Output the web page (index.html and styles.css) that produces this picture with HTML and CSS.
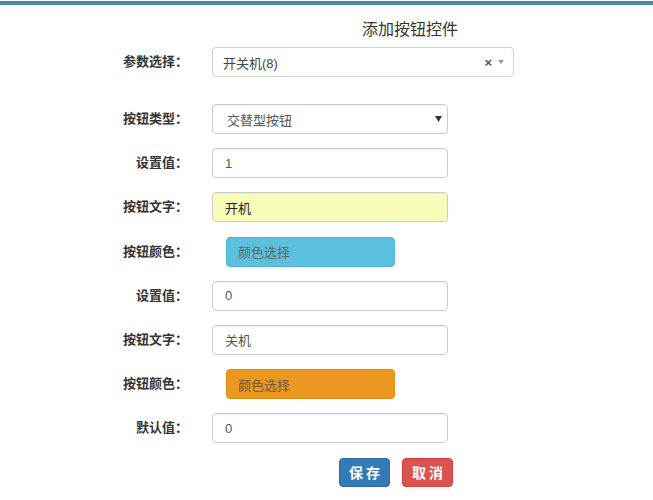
FILE: index.html
```html
<!DOCTYPE html>
<html lang="zh">
<head>
<meta charset="utf-8">
<title>添加按钮控件</title>
<link rel="stylesheet" href="styles.css">
</head>
<body>
<div class="topbar"></div>
<div class="page">
  <h3 class="title">添加按钮控件</h3>
  <form class="form">
    <div class="row row-first">
      <label class="label">参数选择：</label>
      <div class="select2">
        <span class="select2-text">开关机(8)</span>
        <span class="select2-clear">×</span>
        <span class="select2-arrow"></span>
      </div>
    </div>
    <div class="rows">
      <div class="row">
        <label class="label">按钮类型：</label>
        <div class="native-select">
          <span class="ns-text">交替型按钮</span>
          <svg class="ns-arrow" width="7" height="6" viewBox="0 0 7 6"><path d="M0 0H7L3.5 6Z" fill="#333"/></svg>
        </div>
      </div>
      <div class="row">
        <label class="label">设置值：</label>
        <div class="input">1</div>
      </div>
      <div class="row">
        <label class="label">按钮文字：</label>
        <div class="input input-yellow">开机</div>
      </div>
      <div class="row">
        <label class="label">按钮颜色：</label>
        <div class="color-btn color-blue">颜色选择</div>
      </div>
      <div class="row">
        <label class="label">设置值：</label>
        <div class="input">0</div>
      </div>
      <div class="row">
        <label class="label">按钮文字：</label>
        <div class="input">关机</div>
      </div>
      <div class="row">
        <label class="label">按钮颜色：</label>
        <div class="color-btn color-orange">颜色选择</div>
      </div>
      <div class="row">
        <label class="label">默认值：</label>
        <div class="input">0</div>
      </div>
      <div class="actions">
        <button type="button" class="btn btn-primary">保存</button>
        <button type="button" class="btn btn-danger">取消</button>
      </div>
    </div>
  </form>
</div>
</body>
</html>
```
FILE: styles.css
```css
* { box-sizing: border-box; }
html, body { margin: 0; padding: 0; background: #fff; }
body {
  font-family: "Liberation Sans", "Noto Sans CJK SC", sans-serif;
  color: #333;
  font-size: 13px;
}
.topbar {
  margin-top: 1px;
  height: 4px;
  background: #4a86b6;
}
.page { padding-top: 15px; }
.title {
  margin: 0 0 7px 362px;
  font-size: 16px;
  line-height: 20px;
  font-weight: normal;
  color: #333;
}
.form { display: flex; flex-direction: column; }
.row {
  display: flex;
  align-items: center;
  height: 30px;
}
.row-first { margin-bottom: 27px; }
.rows { display: flex; flex-direction: column; gap: 14.2px; }
.label {
  width: 188px;
  margin-right: 24px;
  padding-bottom: 3px;
  text-align: right;
  font-weight: bold;
  font-size: 13px;
  color: #333;
}
.select2 {
  width: 302px;
  height: 30px;
  border: 1px solid #d2d2d2;
  border-radius: 4px;
  display: flex;
  align-items: center;
  padding-left: 10px;
  padding-right: 9px;
  color: #444;
}
.select2-text { flex: 1; }
.select2-clear {
  font-size: 13px;
  font-weight: bold;
  color: #555;
  margin-right: 6px;
}
.select2-arrow {
  width: 0; height: 0;
  border-left: 3px solid transparent;
  border-right: 3px solid transparent;
  border-top: 4px solid #999;
}
.native-select {
  width: 236px;
  height: 30px;
  border: 1px solid #ccc;
  border-radius: 4px;
  display: flex;
  align-items: center;
  padding-left: 14px;
  padding-right: 5px;
  color: #555;
  box-shadow: inset 0 1px 1px rgba(0,0,0,.05);
}
.ns-text { flex: 1; }
.ns-arrow { display: block; }
.input {
  width: 236px;
  height: 30px;
  border: 1px solid #ccc;
  border-radius: 4px;
  display: flex;
  align-items: center;
  padding-left: 12px;
  color: #555;
  box-shadow: inset 0 1px 1px rgba(0,0,0,.05);
}
.input-yellow { background: #f8fdba; color: #222; }
.color-btn {
  margin-left: 14px;
  width: 169px;
  height: 30px;
  border-radius: 4px;
  display: flex;
  align-items: center;
  padding-left: 11px;
  color: #666;
}
.color-blue { background: #5bc0de; border: 1px solid #4fb6d6; }
.color-orange { background: #ec971f; border: 1px solid #e08e1a; color: #6b5a40; }
.actions {
  display: flex;
  gap: 12px;
  padding-left: 339px;
}
.btn {
  font-family: "Noto Sans CJK SC", sans-serif;
  height: 29px;
  width: 51px;
  border-radius: 4px;
  color: #fff;
  font-size: 14px;
  font-weight: bold;
  letter-spacing: 3px;
  padding: 0 0 0 3px;
  cursor: pointer;
}
.btn-primary { background: #337ab7; border: 1px solid #2e6da4; }
.btn-danger { background: #d9534f; border: 1px solid #d43f3a; }
```
